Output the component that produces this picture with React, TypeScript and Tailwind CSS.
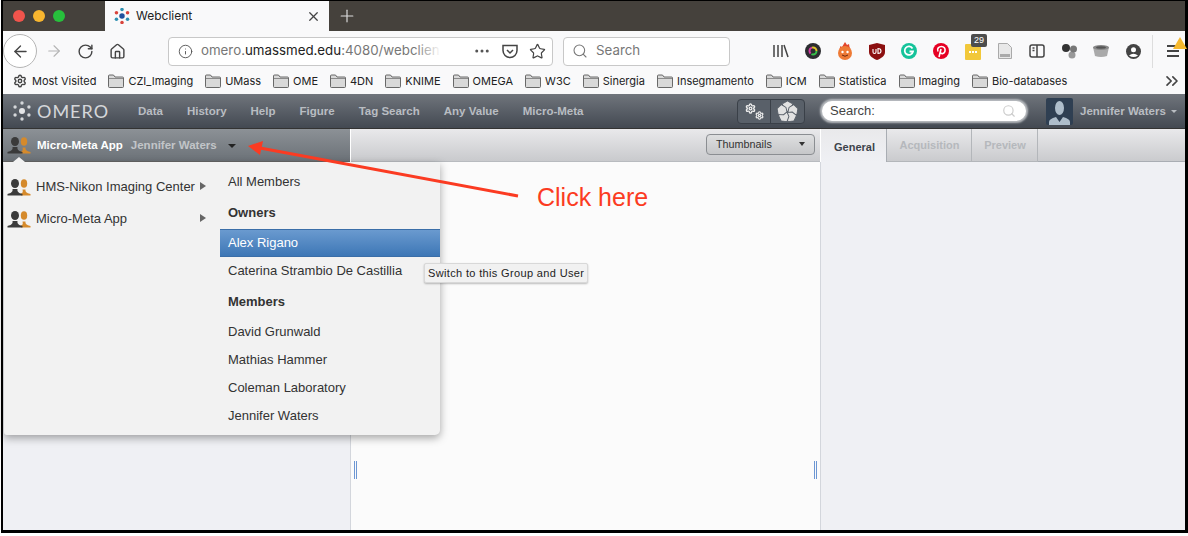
import React from 'react';
import { ArrowLeft, ArrowRight, RotateCw, House, Info, Ellipsis, Star, Search, ChevronsRight, X, Plus, Settings } from 'lucide-react';

const bookmarks = ['CZI_Imaging', 'UMass', 'OME', '4DN', 'KNIME', 'OMEGA', 'W3C', 'Sinergia', 'Insegmamento', 'ICM', 'Statistica', 'Imaging', 'Bio-databases'];
const navItems = ['Data', 'History', 'Help', 'Figure', 'Tag Search', 'Any Value', 'Micro-Meta'];

const Folder = () => (
  <svg width="16" height="14" viewBox="0 0 16 14" className="shrink-0">
    <path d="M0.5 12.5V2a1 1 0 0 1 1-1h4l1.5 2h7.500a1 1 0 0 1 1 1v8.500a1 1 0 0 1-1 1h-13a1 1 0 0 1-1-1z" fill="#d9d9d9" stroke="#5a5a5a" strokeWidth="0.9" />
    <path d="M1 4.500h14" stroke="#777" strokeWidth="0.8" />
  </svg>
);

const GroupIcon = () => (
  <svg width="24" height="17" viewBox="0 0 24 17" className="shrink-0">
    <ellipse cx="17" cy="4.500" rx="3.200" ry="4.300" fill="#d58a2c" />
    <path d="M14 16.500v-2c2-.5 2-2 1.500-4h3c-.5 2 1 3.500 5 4.500v1.500z" fill="#d58a2c" />
    <ellipse cx="8" cy="4.500" rx="4" ry="4.500" fill="#3a3a3a" />
    <path d="M.5 16.500V15c4-1 5.500-2.500 5-5h5c-.5 2.500 1 4 5 5v1.500z" fill="#3a3a3a" />
  </svg>
);

const OmeroMark = ({ size, blue }: { size: number; blue?: boolean }) => {
  const angles = [0, 60, 120, 180, 240, 300];
  return (
    <svg width={size} height={size} viewBox="0 0 20 20" className="shrink-0">
      {angles.map((a, i) => (
        <circle
          key={a}
          cx={10 + 8 * Math.cos(((a + 30) * Math.PI) / 180)}
          cy={10 + 8 * Math.sin(((a + 30) * Math.PI) / 180)}
          r={blue ? 2.2 : 1.7}
          fill={blue ? (i % 2 ? '#d8443c' : '#2d8fb0') : '#d5d7da'}
        />
      ))}
      <circle cx="10" cy="10" r={blue ? 3.4 : 3} fill={blue ? '#1f4f9c' : '#e4e5e7'} />
    </svg>
  );
};

const ToolbarIcons = () => (
  <div className="flex items-center gap-[10px] ml-[40px]">
    <span className="w-[22px] flex justify-center">
      <svg width="16" height="14" viewBox="0 0 16 14" stroke="#444" strokeWidth="1.500" fill="none"><path d="M1 1v12M5 1v12M9 1v12M11 1l4 12" /></svg>
    </span>
    <span className="w-[22px] flex justify-center">
      <svg width="16" height="16" viewBox="0 0 16 16" fill="none" strokeWidth="2">
        <circle cx="8" cy="8" r="8" fill="#2c2c30" />
        <circle cx="8" cy="8" r="3.500" stroke="#37c24a" strokeDasharray="7 15" />
        <circle cx="8" cy="8" r="3.500" stroke="#e0c52a" strokeDasharray="7 15" strokeDashoffset="7" />
        <circle cx="8" cy="8" r="3.500" stroke="#d33ba0" strokeDasharray="7 15" strokeDashoffset="14" />
      </svg>
    </span>
    <span className="w-[22px] flex justify-center">
      <svg width="16" height="18" viewBox="0 0 16 18"><path d="M8 0l2 3 2-1 .5 3 1 2-11 0 1-3 1.500 1z" fill="#e2452b" /><circle cx="8" cy="11" r="7" fill="#ee7a35" /><circle cx="5.500" cy="10" r="1.200" fill="#fff" /><circle cx="10.500" cy="10" r="1.200" fill="#fff" /><path d="M5 13q3 2.500 6 0" stroke="#6b2a10" fill="none" /></svg>
    </span>
    <span className="w-[22px] flex justify-center">
      <svg width="16" height="17" viewBox="0 0 16 17"><path d="M0 2l8-2 8 2v7c0 4-4 6.500-8 8-4-1.500-8-4-8-8z" fill="#8c1010" /><path d="M4 6v3q0 1.500 1.500 1.500T7 9V6M9 5v5.500q3 0 3-2.500T9 5.500" stroke="#fff" fill="none" strokeWidth="1.100" /></svg>
    </span>
    <span className="w-[22px] flex justify-center">
      <svg width="16" height="16" viewBox="0 0 16 16"><circle cx="8" cy="8" r="8" fill="#15c39a" /><path d="M11.500 5.500a4.200 4.200 0 1 0 .500 3H8.500" stroke="#fff" strokeWidth="1.800" fill="none" /></svg>
    </span>
    <span className="w-[22px] flex justify-center">
      <svg width="16" height="16" viewBox="0 0 16 16"><circle cx="8" cy="8" r="8" fill="#e60023" /><path d="M6 14l2-8M5 8.500C3.500 5.500 6 3.500 8.500 3.500s4 2 3.500 4.500-3.500 3.500-4.500 1.500" stroke="#fff" strokeWidth="1.600" fill="none" /></svg>
    </span>
    <span className="w-[22px] flex justify-center relative">
      <span className="w-4 h-4 bg-[#f2c83a] rounded-[1px] mt-[2px] flex items-center justify-center gap-px">
        <span className="w-[2px] h-[2px] bg-white" /><span className="w-[2px] h-[2px] bg-white" /><span className="w-[2px] h-[2px] bg-white" />
      </span>
      <span className="absolute left-[9px] top-[-8px] w-4 h-[13px] bg-[#4d4d4d] rounded-[2px] text-white text-[9px] leading-[13px] text-center">29</span>
    </span>
    <span className="w-[22px] flex justify-center">
      <svg width="14" height="16" viewBox="0 0 14 16"><path d="M.5.500h9l4 4v11H.5z" fill="#e8e8e8" stroke="#aaa" /><rect x="2" y="11" width="10" height="3" fill="#aaa" /></svg>
    </span>
    <span className="w-[22px] flex justify-center">
      <svg width="16" height="14" viewBox="0 0 16 14" fill="none" stroke="#444" strokeWidth="1.500"><rect x="1" y="1" width="14" height="12" rx="2" /><path d="M8 1v12M3.500 4h2M3.500 6.500h2" /></svg>
    </span>
    <span className="w-[22px] flex justify-center">
      <svg width="17" height="16" viewBox="0 0 17 16"><circle cx="11" cy="12" r="3.500" fill="#999" /><circle cx="12.500" cy="6" r="3.500" fill="#777" /><circle cx="5" cy="5" r="4" fill="#333" /></svg>
    </span>
    <span className="w-[22px] flex justify-center">
      <svg width="16" height="12" viewBox="0 0 16 12"><path d="M0 2h16l-2 9q-6 2-12 0z" fill="#aaa" /><ellipse cx="8" cy="2.500" rx="8" ry="2.500" fill="#888" /><ellipse cx="8" cy="2.500" rx="5" ry="1.200" fill="#555" /></svg>
    </span>
    <span className="w-[22px] flex justify-center">
      <svg width="15" height="15" viewBox="0 0 15 15"><circle cx="7.500" cy="7.500" r="7.500" fill="#444" /><circle cx="7.500" cy="5.800" r="2.500" fill="#fff" /><path d="M3 11.500q4.500-3.500 9 0-4.500 3-9 0z" fill="#fff" /></svg>
    </span>
  </div>
);

const App = () => {
  return (
    <div className="relative w-[1188px] h-[536px] bg-white overflow-hidden font-['Liberation_Sans',sans-serif]">
      <div className="w-[1187px] h-[533px] ml-px border-l-2 border-r-[3px] border-b-[3px] border-t border-black flex flex-col bg-white">
        {/* browser tabs */}
        <div className="h-[30px] flex items-stretch bg-[#45413c] shrink-0">
          <div className="w-[102px] flex items-center gap-[8px] pl-[10px]">
            <span className="w-3 h-3 rounded-full bg-[#f0544c]" />
            <span className="w-3 h-3 rounded-full bg-[#f8b62f]" />
            <span className="w-3 h-3 rounded-full bg-[#27c03c]" />
          </div>
          <div className="w-[224px] bg-[#f9f9fa] flex items-center pl-[9px]">
            <OmeroMark size={16} blue />
            <span className="ml-[6px] text-[12px] text-[#222] font-['Inter',sans-serif]">Webclient</span>
            <X size={15} className="ml-auto mr-[8px] text-[#444]" />
          </div>
          <Plus size={20} strokeWidth={1.400} className="self-center ml-[8px] text-[#ddd]" />
        </div>

        {/* toolbar */}
        <div className="h-[40px] bg-[#f9f9fa] flex items-center shrink-0">
          <div className="w-[34px] h-[34px] rounded-full border border-[#b5b5b5] bg-white flex items-center justify-center">
            <ArrowLeft size={19} strokeWidth={1.700} className="text-[#444]" />
          </div>
          <ArrowRight size={18} strokeWidth={1.500} className="ml-[8px] text-[#b4b4b4]" />
          <RotateCw size={17} strokeWidth={2} className="ml-[14px] text-[#444]" />
          <House size={17} strokeWidth={2} className="ml-[15px] text-[#444]" />
          <div className="relative ml-[42px] w-[385px] h-[29px] bg-white border border-[#c8c8c8] rounded-[4px] flex items-center pl-[9px] text-[13.300px] font-['Inter',sans-serif]">
            <Info size={15} strokeWidth={1.500} className="text-[#555] shrink-0" />
            <span className="ml-[8px] w-[264px] whitespace-nowrap text-[#777]">omero.<span className="text-[#222]">umassmed.edu</span>:4080/webclien</span>
            <span className="absolute left-[246px] top-0 w-[26px] h-full bg-linear-to-r from-white/0 to-white" />
            <Ellipsis size={18} className="ml-[8px] text-[#555] shrink-0" />
            <svg width="16" height="15" viewBox="0 0 16 15" fill="none" stroke="#444" strokeWidth="1.500" className="ml-[11px] shrink-0"><path d="M1 1.500h14v5a7 7 0 0 1-14 0z" /><path d="M5 6l3 3 3-3" /></svg>
            <Star size={17} strokeWidth={1.700} className="ml-[11px] text-[#444] shrink-0" />
          </div>
          <div className="ml-[10px] w-[167px] h-[29px] bg-white border border-[#c8c8c8] rounded-[4px] flex items-center pl-[8px] text-[13.300px] text-[#777] font-['Inter',sans-serif]">
            <Search size={16} strokeWidth={1.600} className="text-[#777]" />
            <span className="ml-[8px]">Search</span>
          </div>
          <ToolbarIcons />
          <span className="ml-[8px] w-px h-[33px] bg-[#ddd]" />
          <span className="relative ml-[14px] flex flex-col gap-[3px]">
            <span className="w-3 h-[2px] bg-[#444]" /><span className="w-3 h-[2px] bg-[#444]" /><span className="w-3 h-[2px] bg-[#444]" />
            <span className="absolute left-[6px] -top-[8px] w-0 h-0 border-x-[7px] border-x-transparent border-b-[12px] border-b-[#f5b82e]" />
          </span>
        </div>

        {/* bookmarks */}
        <div className="h-[23px] pb-[3px] bg-[#f9f9fa] flex items-center pl-[10px] text-[11px] text-[#222] font-['Inter',sans-serif] whitespace-nowrap shrink-0">
          <Settings size={14} strokeWidth={2.400} className="text-[#444]" />
          <span className="ml-[5px] mr-[12px]">Most Visited</span>
          {bookmarks.map((name) => (
            <span key={name} className="flex items-center gap-[4px] mr-[12px]">
              <Folder />
              {name}
            </span>
          ))}
          <ChevronsRight size={20} className="ml-auto mr-[3px] text-[#444]" />
        </div>

        {/* omero header */}
        <div className="h-[35px] bg-linear-to-b from-[#70757c] to-[#434952] border-b border-[#333] flex items-center pl-[9px] text-[11.500px] font-bold text-[#b9bdc2] shrink-0">
          <OmeroMark size={20} />
          <span className="ml-[5px] w-[101px] text-[18px] leading-none font-normal tracking-[1px] text-[#d5d7da] font-['Lato',sans-serif]">OMERO</span>
          <div className="w-[599px] mt-px flex gap-[24px] shrink-0">
            {navItems.map((item) => (
              <span key={item}>{item}</span>
            ))}
          </div>
          <div className="w-[68px] h-[25px] flex rounded-[4px] border border-[#3a4048] bg-[#596069] shrink-0">
            <span className="w-[33px] border-r border-[#3a4048] flex justify-center items-center pb-px">
              <Settings size={11} strokeWidth={3} className="text-[#eee] self-start mt-[3px]" />
              <Settings size={9} strokeWidth={3} className="text-[#eee] self-end mb-[2px] -ml-px" />
            </span>
            <span className="flex-1 flex items-center justify-center">
              <svg width="23" height="21" viewBox="-11.500 -11.500 23 22" fill="#e2e2e2" stroke="#596069" strokeWidth="1">
                <path d="M0-11.500l5.500 3-1.500 5.500-4 2.500-4-2.500-1.500-5.500z" />
                <path d="M0-11.500l5.500 3-1.500 5.500-4 2.500-4-2.500-1.500-5.500z" transform="rotate(72)" />
                <path d="M0-11.500l5.500 3-1.500 5.500-4 2.500-4-2.500-1.500-5.500z" transform="rotate(144)" />
                <path d="M0-11.500l5.500 3-1.500 5.500-4 2.500-4-2.500-1.500-5.500z" transform="rotate(216)" />
                <path d="M0-11.500l5.500 3-1.500 5.500-4 2.500-4-2.500-1.500-5.500z" transform="rotate(288)" />
              </svg>
            </span>
          </div>
          <div className="ml-[17px] w-[204px] h-[20px] bg-white rounded-full shadow-[0_0_2px_2px_#b9bcc0] flex items-center pl-[8px] pr-[10px] text-[13px] font-normal text-[#444] shrink-0">
            Search:
            <Search size={14} className="ml-auto text-[#ccc]" />
          </div>
          <div className="ml-[20px] mt-px w-[27px] h-[27px] bg-[#2f3f52] flex items-end justify-center rounded-[2px] shrink-0">
            <svg width="21" height="25" viewBox="0 0 21 25"><ellipse cx="10.500" cy="8" rx="4.500" ry="7" fill="#aebdca" /><path d="M0 25v-3q0-3 7-5l3.500 5 3.500-5q7 2 7 5v3z" fill="#aebdca" /></svg>
          </div>
          <span className="ml-[7px] mt-[2px] whitespace-nowrap">Jennifer Waters</span>
          <span className="ml-[5px] w-0 h-0 border-x-[3px] border-x-transparent border-t-[3px] border-t-[#b9bdc2]" />
        </div>

        {/* sub bar */}
        <div className="h-[33px] flex shrink-0">
          <div className="w-[347px] bg-linear-to-b from-[#8c9196] to-[#6c7278] flex items-center pl-[4px] pt-px text-[11.500px] font-bold border-b border-[#666]">
            <GroupIcon />
            <span className="ml-[6px] text-white">Micro-Meta App</span>
            <span className="ml-[8px] text-[#c2c5c8]">Jennifer Waters</span>
            <span className="ml-[11px] w-0 h-0 border-x-[4px] border-x-transparent border-t-[4px] border-t-[#222]" />
          </div>
          <div className="w-[469px] ml-px bg-linear-to-b from-[#e9e9eb] to-[#c9cacd] border-b border-[#b8bbbf] flex justify-end items-center pr-[5px]">
            <div className="w-[109px] h-[21px] mb-[2px] rounded-[4px] border border-[#8b8e92] bg-linear-to-b from-[#dedfe0] to-[#c6c7c9] flex items-center pl-[9px] pr-[9px] text-[10.800px] text-[#333]">
              Thumbnails
              <span className="ml-auto w-0 h-0 border-x-[3.500px] border-x-transparent border-t-[4px] border-t-[#333]" />
            </div>
          </div>
          <div className="flex-1 ml-px bg-linear-to-b from-[#e9e9eb] to-[#c9cacd] flex text-[11px] font-bold">
            <div className="w-[66px] h-[33px] bg-linear-to-b from-[#e9e9eb] to-[#eff0f4] border-r border-[#a9adb3] flex items-center justify-center text-[#3d434b] pt-[3px] pl-[2px]">General</div>
            <div className="w-[85px] border-r border-[#b3b6ba] border-b pt-px pl-px flex items-center justify-center text-[#b5b8bc]">Acquisition</div>
            <div className="w-[66px] border-r border-[#b3b6ba] border-b pt-px pl-px flex items-center justify-center text-[#b5b8bc]">Preview</div>
            <div className="flex-1 border-b border-[#a9adb3]" />
          </div>
        </div>

        {/* panels */}
        <div className="flex-1 flex">
          <div className="w-[348px] bg-[#eff0f4] border-r border-[#d3d6dc]" />
          <div className="w-[469px] bg-[#fbfbfb] flex items-center justify-between px-[3px] pt-[248px]">
            <span className="w-[3px] h-[18px] border-x border-[#6d97d3]" />
            <span className="w-[3px] h-[18px] border-x border-[#6d97d3]" />
          </div>
          <div className="flex-1 bg-[#eff0f4] border-l border-[#d3d6dc]" />
        </div>
      </div>

      {/* switch group menu */}
      <div className="absolute left-[4px] top-[162px] w-[436px] h-[273px] bg-[#f2f2f2] rounded-br-[5px] rounded-bl-[3px] shadow-[0_3px_8px_rgba(0,0,0,0.35)] flex text-[13px] text-[#333]">
        <div className="w-[216px] pt-[16px] pl-[3px] flex flex-col gap-[14px] relative">
          <div className="absolute left-[9px] -top-[5px] w-0 h-0 border-x-[6px] border-x-transparent border-b-[5px] border-b-[#f2f2f2]" />
          <div className="flex items-center h-[18px]">
            <GroupIcon />
            <span className="ml-[5px] whitespace-nowrap">HMS-Nikon Imaging Center</span>
            <span className="ml-[5px] mb-[3px] w-0 h-0 border-y-[4px] border-y-transparent border-l-[6px] border-l-[#666]" />
          </div>
          <div className="flex items-center h-[18px] pr-[14px]">
            <GroupIcon />
            <span className="ml-[5px]">Micro-Meta App</span>
            <span className="ml-auto mb-[3px] w-0 h-0 border-y-[4px] border-y-transparent border-l-[6px] border-l-[#666]" />
          </div>
        </div>
        <div className="flex-1 flex flex-col pt-[6px]">
          <div className="h-[28px] pl-[8px] flex items-center">All Members</div>
          <div className="h-[33px] pl-[8px] flex items-center font-bold">Owners</div>
          <div className="h-[28px] pl-[8px] flex items-center text-white bg-linear-to-b from-[#6a9acf] to-[#3d77b6] border-y border-[#3a6ea8]">Alex Rigano</div>
          <div className="h-[28px] pl-[8px] flex items-center whitespace-nowrap">Caterina Strambio De Castillia</div>
          <div className="h-[33px] pl-[8px] flex items-center font-bold">Members</div>
          <div className="h-[28px] pl-[8px] flex items-center">David Grunwald</div>
          <div className="h-[28px] pl-[8px] flex items-center">Mathias Hammer</div>
          <div className="h-[28px] pl-[8px] flex items-center">Coleman Laboratory</div>
          <div className="h-[28px] pl-[8px] flex items-center">Jennifer Waters</div>
        </div>
      </div>

      {/* tooltip */}
      <div className="absolute left-[424px] top-[263px] w-[164px] h-[20px] bg-[#f1f1f1] border border-[#d8d8d8] rounded-[2px] shadow-[0_1px_2px_rgba(0,0,0,0.25)] flex items-center pl-[3px] text-[11px] tracking-[0.350px] text-[#222] whitespace-nowrap">
        Switch to this Group and User
      </div>

      {/* annotation */}
      <svg width="290" height="70" viewBox="0 0 290 70" className="absolute left-[240px] top-[135px]">
        <path d="M278 61L20 13" stroke="#fb3b22" strokeWidth="3" fill="none" />
        <path d="M8 11L23 6L20 20z" fill="#fb3b22" />
      </svg>
      <span className="absolute left-[537px] top-[182px] text-[25px] leading-[30px] text-[#fb3b22] whitespace-nowrap">Click here</span>
    </div>
  );
};

export default App;
